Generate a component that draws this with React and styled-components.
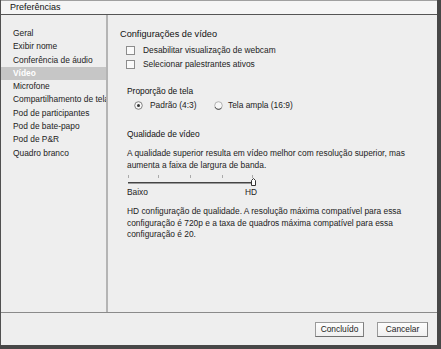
import React from "react";
import styled, { createGlobalStyle } from "styled-components";

const Global = createGlobalStyle`
  html, body { margin: 0; padding: 0; background: #474747; }
  body { width: 441px; height: 349px; overflow: hidden; font-family: "Liberation Sans", Arial, sans-serif; }
  #root { width: 441px; height: 349px; }
`;

const Window = styled.div`
  width: 436px;
  height: 345px;
  border-left: 1px solid #505050;
  background: #eeeeee;
  display: flex;
  flex-direction: column;
  color: #222;
  font-size: 8.4px;
`;

const TitleBar = styled.div`
  height: 13px;
  background: #f5f5f5;
  border-top: 1px solid #a0a0a0;
  border-bottom: 1px solid #555;
  padding-left: 9px;
  font-size: 9px;
  line-height: 13px;
  color: #111;
`;

const Body = styled.div`
  flex: 1;
  display: flex;
  border-bottom: 1px solid #8a8a8a;
`;

const Sidebar = styled.div`
  width: 105px;
  border-right: 2px solid #b4b4b4;
  padding-top: 12px;
  display: flex;
  flex-direction: column;
`;

const NavItem = styled.div`
  height: 13.3px;
  line-height: 13.3px;
  padding-left: 12px;
  white-space: nowrap;
  overflow: hidden;
  background: ${(p) => (p.$active ? "#c6c6c6" : "transparent")};
  color: ${(p) => (p.$active ? "#fff" : "#222")};
  font-weight: ${(p) => (p.$active ? "bold" : "normal")};
`;

const Content = styled.div`
  flex: 1;
  padding: 12px 0 0 12px;
  display: flex;
  flex-direction: column;
`;

const Heading = styled.div`
  font-size: 9.2px;
  line-height: 14px;
  color: #111;
`;

const CheckRow = styled.label`
  display: flex;
  align-items: center;
  gap: 8px;
  height: 14px;
  padding-left: 6px;
  margin-top: ${(p) => p.$mt || 0}px;
`;

const Box = styled.span`
  width: 7px;
  height: 7px;
  border: 1px solid #8c8c8c;
  background: #fafafa;
`;

const Section = styled.div`
  padding-left: 7px;
  margin-top: ${(p) => p.$mt || 0}px;
  display: flex;
  flex-direction: column;
`;

const SubHeading = styled.div`
  line-height: 13px;
  color: #111;
`;

const RadioRow = styled.div`
  display: flex;
  align-items: center;
  height: 14px;
  padding-left: 7px;
`;

const RadioOpt = styled.label`
  display: flex;
  align-items: center;
  gap: ${(p) => p.$gap}px;
  width: ${(p) => p.$w || "auto"};
`;

const Para = styled.div`
  line-height: 11.5px;
  width: 292px;
  margin-top: ${(p) => p.$mt || 0}px;
`;

const SliderWrap = styled.div`
  width: 132px;
  height: 12px;
  margin-top: 4px;
`;

const Labels = styled.div`
  display: flex;
  justify-content: space-between;
  width: 130px;
  line-height: 11px;
`;

const Footer = styled.div`
  height: 32px;
  display: flex;
  justify-content: flex-end;
  align-items: center;
  gap: 13px;
  padding-right: 9px;
`;

const Button = styled.button`
  width: ${(p) => p.$w}px;
  height: 15px;
  padding: 0;
  font-family: inherit;
  font-size: 8.4px;
  color: #222;
  background: linear-gradient(#fdfdfd, #f0f0f0);
  border: 1px solid #9a9a9a;
  border-bottom-color: #707070;
  border-right-color: #808080;
`;

const Radio = ({ on }) => (
  <svg width="9" height="9" viewBox="0 0 9 9">
    <circle cx="4.5" cy="4.5" r="3.8" fill="#f7f7f7" stroke={on ? "#777" : "#aaa"} strokeWidth="0.9" />
    {!on && <path d="M1 6 A3.8 3.8 0 0 0 7.5 7" stroke="#555" strokeWidth="1" fill="none" />}
    {on && <circle cx="4.5" cy="4.5" r="1.5" fill="#333" />}
  </svg>
);

const Slider = () => (
  <SliderWrap>
    <svg width="132" height="12" viewBox="0 0 132 12">
      {[0, 30, 62, 94, 124].map((x) => (
        <rect key={x} x={x + 1} y="0" width="1" height="3" fill="#aaa" />
      ))}
      <rect x="1" y="7" width="125" height="1" fill="#444" />
      <rect x="1" y="8" width="125" height="1" fill="#999" />
      <path d="M124.5 10.5 V5.5 L126.5 3.5 L128.5 5.5 V10.5 Z" fill="#fff" stroke="#333" strokeWidth="1" />
    </svg>
  </SliderWrap>
);

const items = [
  "Geral",
  "Exibir nome",
  "Conferência de áudio",
  "Vídeo",
  "Microfone",
  "Compartilhamento de tela",
  "Pod de participantes",
  "Pod de bate-papo",
  "Pod de P&R",
  "Quadro branco",
];

export default function App() {
  return (
    <>
      <Global />
      <Window>
        <TitleBar>Preferências</TitleBar>
        <Body>
          <Sidebar>
            {items.map((t) => (
              <NavItem key={t} $active={t === "Vídeo"}>
                {t}
              </NavItem>
            ))}
          </Sidebar>
          <Content>
            <Heading>Configurações de vídeo</Heading>
            <CheckRow $mt={2}>
              <Box />
              Desabilitar visualização de webcam
            </CheckRow>
            <CheckRow>
              <Box />
              Selecionar palestrantes ativos
            </CheckRow>
            <Section $mt={14}>
              <SubHeading>Proporção de tela</SubHeading>
              <RadioRow>
                <RadioOpt $w="80px" $gap={7}>
                  <Radio on />
                  Padrão (4:3)
                </RadioOpt>
                <RadioOpt $gap={5}>
                  <Radio />
                  Tela ampla (16:9)
                </RadioOpt>
              </RadioRow>
            </Section>
            <Section $mt={16}>
              <SubHeading>Qualidade de vídeo</SubHeading>
              <Para $mt={7}>
                A qualidade superior resulta em vídeo melhor com resolução superior, mas aumenta a faixa de largura de banda.
              </Para>
              <Slider />
              <Labels>
                <span>Baixo</span>
                <span>HD</span>
              </Labels>
              <Para $mt={8}>
                HD configuração de qualidade. A resolução máxima compatível para essa configuração é 720p e a taxa de quadros máxima compatível para essa configuração é 20.
              </Para>
            </Section>
          </Content>
        </Body>
        <Footer>
          <Button $w={49}>Concluído</Button>
          <Button $w={51}>Cancelar</Button>
        </Footer>
      </Window>
    </>
  );
}
